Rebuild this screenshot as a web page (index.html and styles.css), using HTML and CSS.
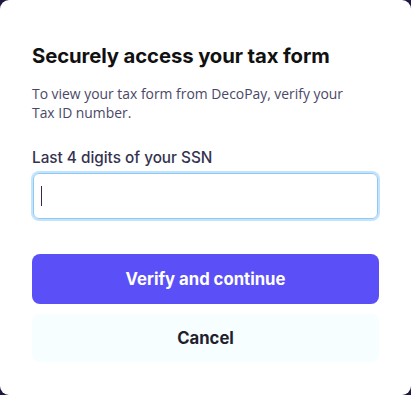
FILE: index.html
```html
<!DOCTYPE html>
<html>
<head>
<meta charset="utf-8">
<link rel="stylesheet" href="styles.css">
</head>
<body>
<div class="card">
  <h1 class="title">Securely access your tax form</h1>
  <p class="desc">To view your tax form from DecoPay, verify your Tax ID number.</p>
  <label class="label">Last 4 digits of your SSN</label>
  <div class="input"><span class="caret"></span></div>
  <div class="actions">
    <button class="btn primary">Verify and continue</button>
    <button class="btn secondary">Cancel</button>
  </div>
</div>
</body>
</html>
```
FILE: styles.css
```css
html, body {
  margin: 0;
  padding: 0;
  background: #1b1940;
  height: 100%;
}
.card {
  box-sizing: border-box;
  height: 395px;
  width: 411px;
  background: #ffffff;
  border-radius: 9px;
  padding: 44px 32px 0 32px;
  display: flex;
  flex-direction: column;
  font-family: Inter, "Liberation Sans", sans-serif;
}
.title {
  margin: 0;
  font-size: 20.3px;
  line-height: 24px;
  font-weight: 700;
  color: #111111;
  letter-spacing: -0.1px;
}
.desc {
  margin: 16px 0 0 0;
  width: 325px;
  font-family: "Open Sans", sans-serif;
  font-size: 13.9px;
  line-height: 19px;
  color: #4a4868;
}
.label {
  margin-top: 26px;
  font-size: 15.3px;
  line-height: 20px;
  font-weight: 500;
  color: #34334f;
}
.input {
  margin: 5px 1px 0 1px;
  box-sizing: border-box;
  height: 46px;
  border: 1px solid #8fcaf5;
  box-shadow: 0 0 0 2px #c4e4fd;
  border-radius: 6px;
  display: flex;
  align-items: center;
  padding-left: 7px;
}
.caret {
  width: 1px;
  height: 20px;
  background: #2e2c4f;
}
.actions {
  margin-top: 35px;
  display: flex;
  flex-direction: column;
  gap: 10px;
}
.btn {
  height: 50px;
  border: none;
  border-radius: 8px;
  font-family: Inter, "Liberation Sans", sans-serif;
  font-size: 16.7px;
  font-weight: 700;
  cursor: pointer;
}
.primary {
  background: #5b4ff8;
  color: #ffffff;
}
.secondary {
  height: 48px;
  background: #f6feff;
  color: #1f1f2e;
}
```
